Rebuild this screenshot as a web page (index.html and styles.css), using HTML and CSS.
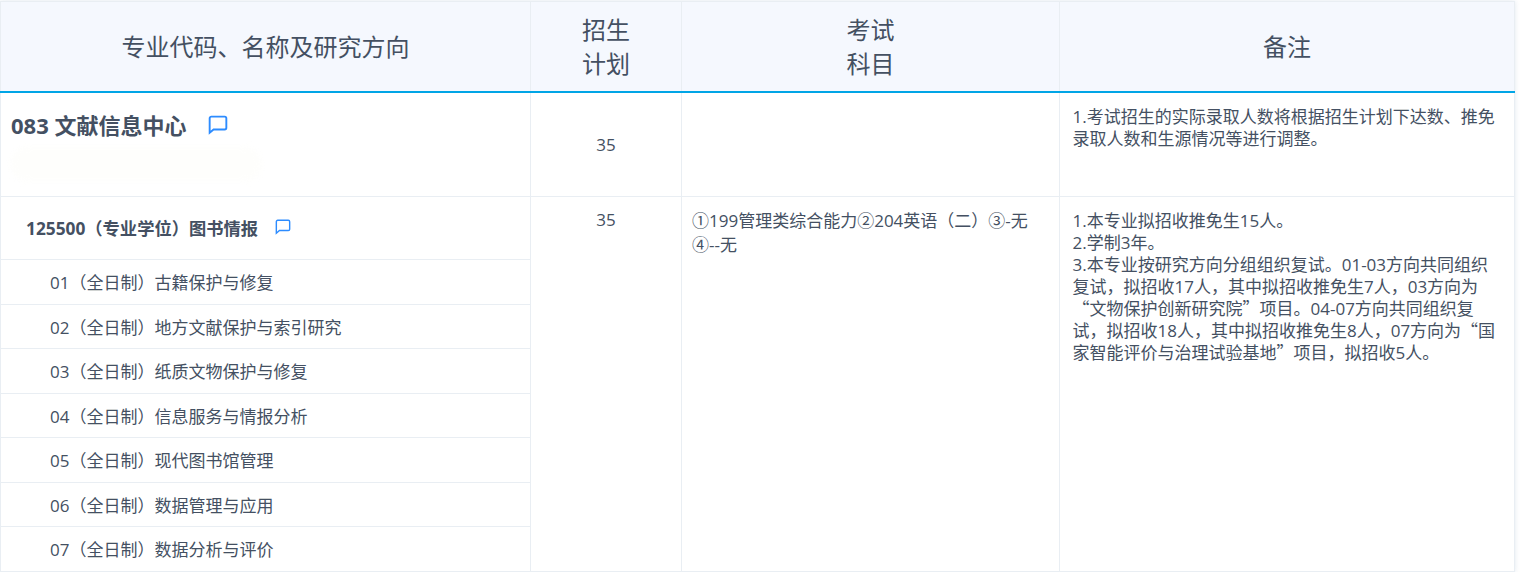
FILE: index.html
```html
<!DOCTYPE html>
<html lang="zh-CN">
<head>
<meta charset="utf-8">
<title>专业目录</title>
<link rel="stylesheet" href="styles.css">
</head>
<body>
<table class="catalog">
  <colgroup>
    <col class="col-major"><col class="col-plan"><col class="col-exam"><col class="col-note">
  </colgroup>
  <thead>
    <tr>
      <th>专业代码、名称及研究方向</th>
      <th>招生<br>计划</th>
      <th>考试<br>科目</th>
      <th>备注</th>
    </tr>
  </thead>
  <tbody>
    <tr class="dept-row">
      <td class="dept-cell">
        <div class="dept-title">
          <span>083 文献信息中心</span>
          <svg class="icon-lg" viewBox="0 0 18 18" aria-hidden="true"><path d="M3 1.5h12a1.5 1.5 0 0 1 1.5 1.5v8.5a1.5 1.5 0 0 1-1.5 1.5H5L1.5 16V3A1.5 1.5 0 0 1 3 1.5z"/></svg>
        </div>
        <div class="smudge"></div>
      </td>
      <td class="plan">35</td>
      <td></td>
      <td class="note note-top">1.考试招生的实际录取人数将根据招生计划下达数、推免录取人数和生源情况等进行调整。</td>
    </tr>
    <tr class="major-row">
      <td class="major-cell">
        <div class="major-title">
          <span>125500（专业学位）图书情报</span>
          <svg class="icon-sm" viewBox="0 0 18 18" aria-hidden="true"><path d="M3 1.5h12a1.5 1.5 0 0 1 1.5 1.5v8.5a1.5 1.5 0 0 1-1.5 1.5H5L1.5 16V3A1.5 1.5 0 0 1 3 1.5z"/></svg>
        </div>
        <div class="dir">01（全日制）古籍保护与修复</div>
        <div class="dir">02（全日制）地方文献保护与索引研究</div>
        <div class="dir">03（全日制）纸质文物保护与修复</div>
        <div class="dir">04（全日制）信息服务与情报分析</div>
        <div class="dir">05（全日制）现代图书馆管理</div>
        <div class="dir">06（全日制）数据管理与应用</div>
        <div class="dir">07（全日制）数据分析与评价</div>
      </td>
      <td class="plan plan-top">35</td>
      <td class="exam">①199管理类综合能力②204英语（二）③-无<br>④--无</td>
      <td class="note">1.本专业拟招收推免生15人。<br>2.学制3年。<br>3.本专业按研究方向分组组织复试。01-03方向共同组织复试，拟招收17人，其中拟招收推免生7人，03方向为<span class="cq">“</span>文物保护创新研究院<span class="cq">”</span>项目。04-07方向共同组织复试，拟招收18人，其中拟招收推免生8人，07方向为<span class="cq">“</span>国家智能评价与治理试验基地<span class="cq">”</span>项目，拟招收5人。</td>
    </tr>
  </tbody>
</table>
</body>
</html>
```
FILE: styles.css
```css
* { box-sizing: border-box; }
html, body { margin: 0; padding: 0; background: #fff; }
body {
  padding-top: 1px;
  overflow: hidden;
  font-family: "Open Sans", "Noto Sans CJK SC", sans-serif;
  color: #445062;
  font-size: 17px;
  text-spacing-trim: space-all;
  text-autospace: no-autospace;
}
.cq { font-family: "Noto Sans CJK SC", sans-serif; line-height: 0; }
.catalog {
  width: 1514px;
  table-layout: fixed;
  border-collapse: collapse;
  box-shadow: 0 0 5px rgba(170, 190, 210, .35);
}
.col-major { width: 530px; }
.col-plan { width: 151px; }
.col-exam { width: 378px; }
.col-note { width: 455px; }
th, td { border: 1px solid #e9eef3; padding: 0; vertical-align: top; }
th {
  height: 90px;
  padding-top: 2px;
  background: #f5f8fe;
  border-bottom: 2px solid #00a5e6;
  font-weight: 400;
  font-size: 24px;
  line-height: 34px;
  text-align: center;
  vertical-align: middle;
}
.dept-row td { height: 105px; }
.dept-cell { padding: 17px 0 0 10px; }
.dept-title {
  display: flex;
  align-items: center;
  gap: 22px;
  font-size: 22px;
  font-weight: 700;
  line-height: 30px;
}
.icon-lg, .icon-sm { fill: none; stroke: #2d8cff; stroke-width: 1.7; }
.icon-lg { width: 20px; height: 20px; }
.icon-sm { width: 16px; height: 16px; stroke-width: 1.6; }
.smudge {
  width: 250px;
  height: 34px;
  margin-top: 7px;
  border-radius: 16px;
  background: #fefefc;
  filter: blur(3px);
}
.plan { text-align: center; vertical-align: middle; line-height: 24px; padding-top: 2px; }
.plan-top { vertical-align: top; padding-top: 11px; }
.note { padding: 13px 15px 0 12.5px; line-height: 22px; }
.note-top { padding-top: 13px; }
.exam { padding: 12px 10px 0 10px; line-height: 24px; }
.major-title {
  display: flex;
  align-items: center;
  gap: 17px;
  height: 62px;
  padding-left: 25px;
  padding-bottom: 2px;
  font-weight: 700;
  font-size: 17.3px;
}
.dir {
  height: 44.5px;
  border-top: 1px solid #e9eef3;
  padding-left: 49px;
  line-height: 45px;
}
```
